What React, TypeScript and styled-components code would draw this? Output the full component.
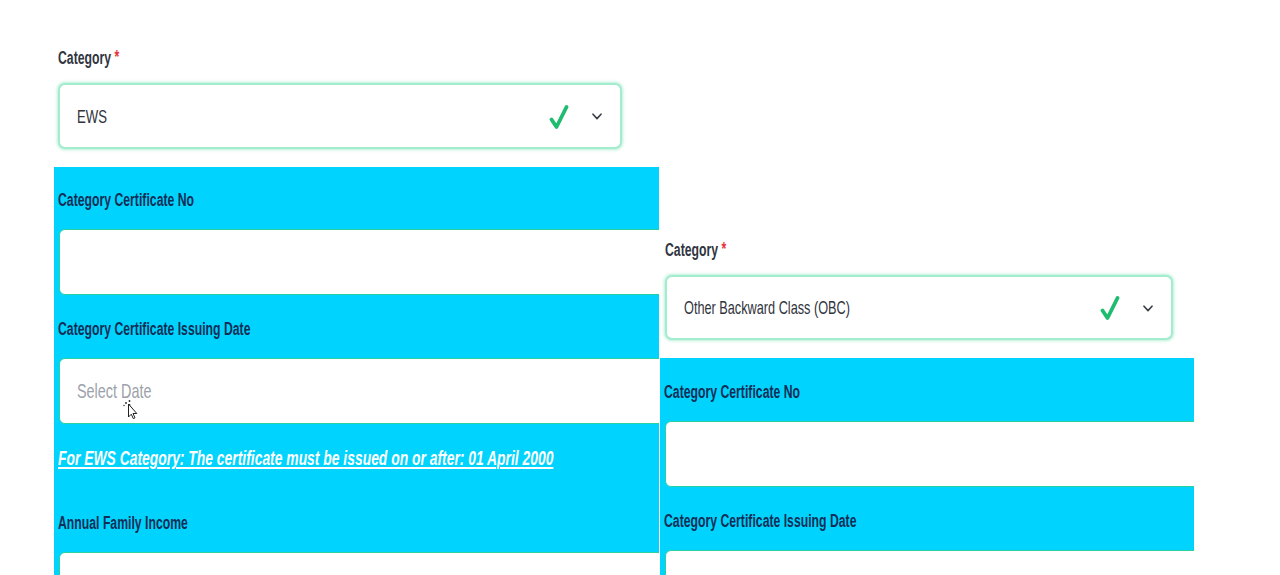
import React from "react";
import styled, { createGlobalStyle } from "styled-components";

const FONT = `"Liberation Sans", Arial, sans-serif`;

const GlobalStyle = createGlobalStyle`
  html, body { margin: 0; padding: 0; background: #ffffff; }
  body { font-family: ${FONT}; overflow: hidden; }
  * { box-sizing: border-box; }
`;

/* The reference type is a tall, condensed face; Liberation Sans is squeezed to match it. */
const Squeeze = styled.span<{ $k?: number }>`
  display: inline-block;
  white-space: nowrap;
  transform: scaleX(${(p) => p.$k ?? 0.68});
  transform-origin: 0 50%;
`;

const HintText = styled(Squeeze)`
  text-decoration: underline;
  text-decoration-thickness: 1.5px;
  text-underline-offset: 2px;
`;

const Page = styled.main`
  display: flex;
  align-items: flex-start;
  width: 1280px;
  height: 575px;
  overflow: hidden;
  background: #ffffff;
`;

const Screen = styled.section<{ $top: number; $left: number; $width: number }>`
  flex: 0 0 ${(p) => p.$width}px;
  height: 575px;
  overflow: hidden;
  background: #ffffff;
  padding: ${(p) => p.$top}px 0 0 ${(p) => p.$left}px;
`;

const CategoryBlock = styled.div<{ $inset: number }>`
  padding-left: ${(p) => p.$inset}px;
  margin-bottom: 18px;
`;

const CategoryLabel = styled.label`
  display: block;
  font-size: 18px;
  font-weight: 700;
  line-height: 20px;
  height: 20px;
  color: #30353f;
  margin-bottom: 16px;
`;

const Required = styled.span`
  color: #e5383b;
  margin-left: 5px;
  font-size: 18px;
  vertical-align: 1px;
`;

const Select = styled.div<{ $width: number; $height: number }>`
  width: ${(p) => p.$width}px;
  height: ${(p) => p.$height}px;
  display: flex;
  align-items: center;
  padding: 1px 18px 0 17px;
  border: 2px solid #a4ecce;
  border-radius: 7px;
  background: #ffffff;
  box-shadow: 0 0 3px 1px rgba(96, 220, 168, 0.45);
`;

const SelectValue = styled.span`
  flex: 1;
  font-size: 19px;
  line-height: 22px;
  color: #30343c;
`;

const SelectIcons = styled.span`
  display: flex;
  align-items: center;
  gap: 23px;
`;

const Panel = styled.div<{ $width: number; $top: number }>`
  width: ${(p) => p.$width}px;
  background: #00d4fe;
  padding: ${(p) => p.$top}px 0 0 4px;
  overflow: hidden;
`;

const Field = styled.div<{ $gap: number }>`
  margin-bottom: ${(p) => p.$gap}px;
`;

const FieldLabel = styled.label`
  display: block;
  font-size: 18px;
  font-weight: 700;
  line-height: 20px;
  height: 20px;
  color: #112e56;
  margin-bottom: 19px;
`;

const InputBox = styled.div`
  position: relative;
  display: flex;
  align-items: center;
  width: calc(100% + 24px);
  height: 66px;
  margin-left: 1px;
  padding-left: 17px;
  border: 1.5px solid #2ccf9f;
  border-radius: 6px;
  background: #ffffff;
`;

const Placeholder = styled.span`
  font-size: 21px;
  line-height: 24px;
  color: #9ca2aa;
`;

const Hint = styled.p`
  margin: 3px 0 45px 0;
  font-size: 20px;
  font-weight: 700;
  font-style: italic;
  line-height: 20px;
  color: #ffffff;
`;

const Pointer = styled.svg`
  position: absolute;
  left: 63px;
  top: 41px;
  pointer-events: none;
`;

const CheckIcon = () => (
  <svg width="20" height="26" viewBox="0 0 20 26" aria-hidden>
    <path
      d="M2.5 15.5 L7.5 23 L17.5 3"
      fill="none"
      stroke="#1fbc70"
      strokeWidth="3.8"
      strokeLinecap="round"
      strokeLinejoin="round"
    />
  </svg>
);

const ChevronIcon = () => (
  <svg width="10" height="7" viewBox="0 0 10 7" aria-hidden>
    <path
      d="M1 1.2 L5 5.6 L9 1.2"
      fill="none"
      stroke="#3a3f48"
      strokeWidth="1.6"
      strokeLinecap="round"
      strokeLinejoin="round"
    />
  </svg>
);

const MouseCursor = () => (
  <Pointer width="16" height="20" viewBox="0 0 16 20" aria-hidden>
    <g fill="#222">
      <circle cx="3" cy="3" r="0.9" />
      <circle cx="6.5" cy="1" r="0.9" />
      <circle cx="6.5" cy="5" r="0.9" />
      <circle cx="1" cy="5.5" r="0.7" />
    </g>
    <path
      d="M5.5 4 L5.5 17 L8.3 14.2 L10.3 18.6 L12 17.8 L10 13.5 L13.8 13.5 Z"
      fill="#ffffff"
      stroke="#222"
      strokeWidth="1"
      strokeLinejoin="round"
    />
  </Pointer>
);

type ScreenProps = {
  top: number;
  left: number;
  width: number;
  inset: number;
  value: string;
  valueK: number;
  selectWidth: number;
  selectHeight: number;
  panelWidth: number;
  panelTop: number;
  gap: number;
  ews?: boolean;
};

const FormScreen: React.FC<ScreenProps> = ({
  top,
  left,
  width,
  inset,
  value,
  valueK,
  selectWidth,
  selectHeight,
  panelWidth,
  panelTop,
  gap,
  ews,
}) => (
  <Screen $top={top} $left={left} $width={width}>
    <CategoryBlock $inset={inset}>
      <CategoryLabel>
        <Squeeze>
          Category<Required>*</Required>
        </Squeeze>
      </CategoryLabel>
      <Select $width={selectWidth} $height={selectHeight}>
        <SelectValue>
          <Squeeze $k={valueK}>{value}</Squeeze>
        </SelectValue>
        <SelectIcons>
          <CheckIcon />
          <ChevronIcon />
        </SelectIcons>
      </Select>
    </CategoryBlock>
    <Panel $width={panelWidth} $top={panelTop}>
      <Field $gap={gap}>
        <FieldLabel>
          <Squeeze>Category Certificate No</Squeeze>
        </FieldLabel>
        <InputBox />
      </Field>
      <Field $gap={gap}>
        <FieldLabel>
          <Squeeze>Category Certificate Issuing Date</Squeeze>
        </FieldLabel>
        <InputBox>
          <Placeholder>
            <Squeeze $k={0.686}>Select Date</Squeeze>
          </Placeholder>
          {ews && <MouseCursor />}
        </InputBox>
      </Field>
      {ews && (
        <>
          <Hint>
            <HintText $k={0.694}>
              For EWS Category: The certificate must be issued on or after: 01 April 2000
            </HintText>
          </Hint>
          <Field $gap={gap}>
            <FieldLabel>
              <Squeeze>Annual Family Income</Squeeze>
            </FieldLabel>
            <InputBox />
          </Field>
        </>
      )}
    </Panel>
  </Screen>
);

export default function App() {
  return (
    <>
      <GlobalStyle />
      <Page>
        <FormScreen
          top={47}
          left={54}
          width={660}
          inset={4}
          value="EWS"
          valueK={0.693}
          selectWidth={564}
          selectHeight={66}
          panelWidth={605}
          panelTop={23}
          gap={24}
          ews
        />
        <FormScreen
          top={239}
          left={0}
          width={620}
          inset={5}
          value="Other Backward Class (OBC)"
          valueK={0.669}
          selectWidth={508}
          selectHeight={65}
          panelWidth={534}
          panelTop={24}
          gap={24}
        />
      </Page>
    </>
  );
}
